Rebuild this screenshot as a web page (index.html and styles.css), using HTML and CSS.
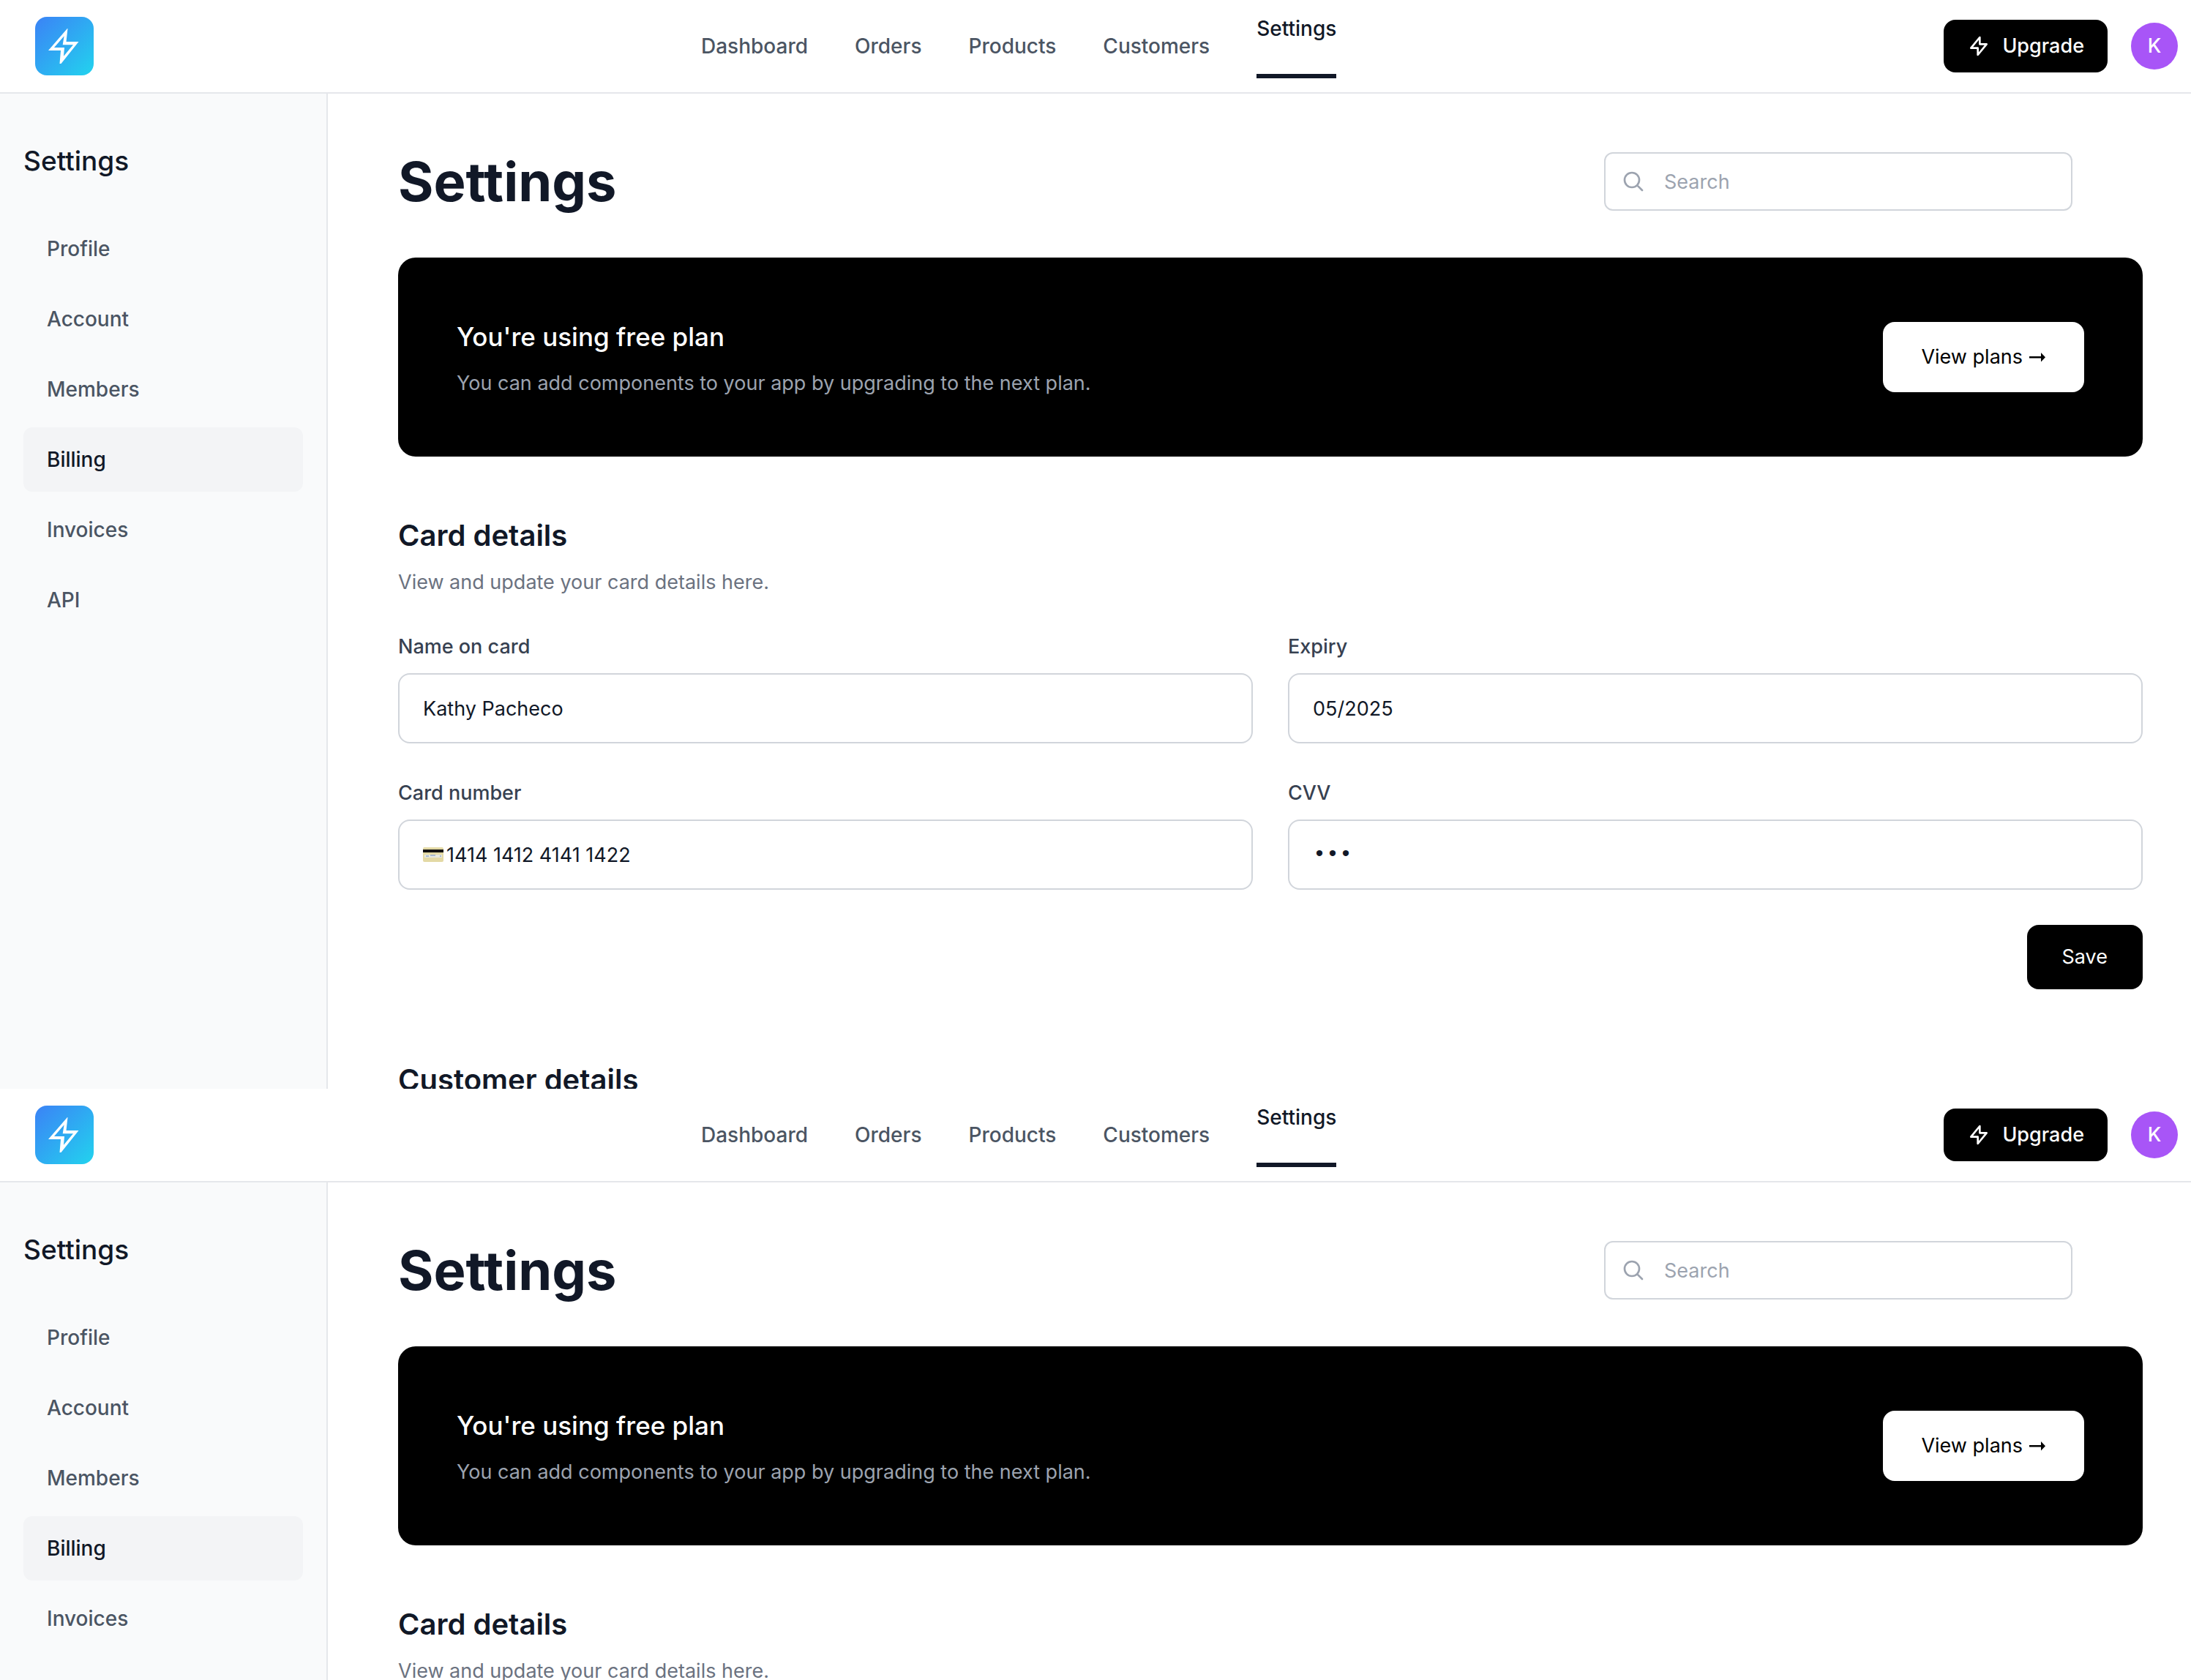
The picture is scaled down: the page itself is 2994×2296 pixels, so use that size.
FILE: index.html
```html
<!DOCTYPE html>
<html lang="en">
<head>
<meta charset="utf-8">
<title>Settings</title>
<meta name="viewport" content="width=device-width, initial-scale=1">
<link rel="stylesheet" href="styles.css">
</head>
<body>
<section class="screen">
  <header class="topbar">
    <a class="logo" href="#" aria-label="Home"><svg viewBox="0 0 80 80" aria-hidden="true"><path fill="#fff" fill-rule="evenodd" d="M44 16 18 46H35L33.500 64H35.500L59.500 34H42.500L44.500 16ZM39.600 26.300 26 42H40L39 53.700 52 38.300H37.700Z"/></svg></a>
    <nav class="topnav" aria-label="Main">
      <a href="#">Dashboard</a><a href="#">Orders</a><a href="#">Products</a><a href="#">Customers</a><a class="current" href="#">Settings</a>
    </nav>
    <div class="actions">
      <button class="btn upgrade" type="button"><svg viewBox="0 0 24 24" aria-hidden="true"><path d="M13 10V3L4 14h7v7l9-11h-7z"/></svg>Upgrade</button>
      <span class="avatar">K</span>
    </div>
  </header>
  <div class="body">
    <aside class="sidebar">
      <h2>Settings</h2>
      <nav class="menu" aria-label="Settings">
        <a href="#">Profile</a><a href="#">Account</a><a href="#">Members</a><a class="current" href="#">Billing</a><a href="#">Invoices</a><a href="#">API</a>
      </nav>
    </aside>
    <main class="content">
      <div class="heading">
        <h1>Settings</h1>
        <div class="search">
          <svg viewBox="0 0 24 24" aria-hidden="true"><path d="M21 21l-5.197-5.197m0 0A7.500 7.500 0 105.196 5.196a7.500 7.500 0 0010.607 10.607z"/></svg>
          <input type="text" placeholder="Search" aria-label="Search">
        </div>
      </div>
      <section class="banner">
        <div class="intro"><h2>You're using free plan</h2><p>You can add components to your app by upgrading to the next plan.</p></div>
        <button class="btn plans" type="button">View plans <svg viewBox="0 0 24 24" aria-hidden="true"><path d="M1 11H17V6L23 12.300 17 18.500V13.500H1Z"/></svg></button>
      </section>
      <form class="section">
        <div class="intro"><h2>Card details</h2><p>View and update your card details here.</p></div>
        <div class="fields">
          <div class="field"><label for="name-1">Name on card</label><input id="name-1" type="text" value="Kathy Pacheco"></div>
          <div class="field"><label for="expiry-1">Expiry</label><input id="expiry-1" type="text" value="05/2025"></div>
          <div class="field"><label for="number-1">Card number</label>
            <div class="cardbox"><svg viewBox="0 0 28 20" aria-hidden="true"><rect width="28" height="20" rx="2" fill="#e3d9a5"/><rect y="3" width="28" height="4" fill="#111"/><rect x="2" y="10" width="24" height="4" fill="#e6e8e0"/><path d="M4 12h4m2-1h7m6 1h2" stroke="#a9bad0" stroke-width="2"/></svg><input id="number-1" type="text" value="1414 1412 4141 1422"></div></div>
          <div class="field"><label for="cvv-1">CVV</label><input id="cvv-1" type="password" value="142"></div>
        </div>
        <button class="btn save" type="button">Save</button>
      </form>
      <section class="section next"><h2>Customer details</h2></section>
    </main>
  </div>
</section>
<section class="screen">
  <header class="topbar">
    <a class="logo" href="#" aria-label="Home"><svg viewBox="0 0 80 80" aria-hidden="true"><path fill="#fff" fill-rule="evenodd" d="M44 16 18 46H35L33.500 64H35.500L59.500 34H42.500L44.500 16ZM39.600 26.300 26 42H40L39 53.700 52 38.300H37.700Z"/></svg></a>
    <nav class="topnav" aria-label="Main">
      <a href="#">Dashboard</a><a href="#">Orders</a><a href="#">Products</a><a href="#">Customers</a><a class="current" href="#">Settings</a>
    </nav>
    <div class="actions">
      <button class="btn upgrade" type="button"><svg viewBox="0 0 24 24" aria-hidden="true"><path d="M13 10V3L4 14h7v7l9-11h-7z"/></svg>Upgrade</button>
      <span class="avatar">K</span>
    </div>
  </header>
  <div class="body">
    <aside class="sidebar">
      <h2>Settings</h2>
      <nav class="menu" aria-label="Settings">
        <a href="#">Profile</a><a href="#">Account</a><a href="#">Members</a><a class="current" href="#">Billing</a><a href="#">Invoices</a>
      </nav>
    </aside>
    <main class="content">
      <div class="heading">
        <h1>Settings</h1>
        <div class="search">
          <svg viewBox="0 0 24 24" aria-hidden="true"><path d="M21 21l-5.197-5.197m0 0A7.500 7.500 0 105.196 5.196a7.500 7.500 0 0010.607 10.607z"/></svg>
          <input type="text" placeholder="Search" aria-label="Search">
        </div>
      </div>
      <section class="banner">
        <div class="intro"><h2>You're using free plan</h2><p>You can add components to your app by upgrading to the next plan.</p></div>
        <button class="btn plans" type="button">View plans <svg viewBox="0 0 24 24" aria-hidden="true"><path d="M1 11H17V6L23 12.300 17 18.500V13.500H1Z"/></svg></button>
      </section>
      <section class="section">
        <div class="intro"><h2>Card details</h2><p>View and update your card details here.</p></div>
      </section>
    </main>
  </div>
</section>
</body>
</html>
```
FILE: styles.css
```css
* { box-sizing: border-box; margin: 0; padding: 0; }

body {
  height: 100vh;
  overflow: hidden;
  background: #fff;
  color: #111827;
  font: 400 27px/40px Inter, "Liberation Sans", sans-serif;
}

a { color: inherit; text-decoration: none; }
input, button { font: inherit; color: inherit; }
h1, h2 { font-weight: 500; }

/* Each screen shows a fixed viewport of the app and cuts off what runs past it. */
.screen {
  display: flex;
  flex-direction: column;
  height: 1488px;
  overflow: hidden;
}

.topbar {
  display: flex;
  flex: none;
  align-items: center;
  justify-content: space-between;
  height: 128px;
  padding: 0 18px 0 48px;
  border-bottom: 2px solid #e5e7eb;
}

.logo {
  width: 80px;
  height: 80px;
  border-radius: 16px;
  background: linear-gradient(135deg, #3b82f6, #22d3ee);
}
.logo svg { display: block; }

.topnav {
  display: flex;
  align-items: center;
  gap: 64px;
  color: #4b5563;
  font-size: 28px;
  font-weight: 500;
}
.topnav .current {
  height: 88px;
  border-bottom: 6px solid #111827;
  color: #111827;
}

.actions { display: flex; align-items: center; gap: 32px; }

.btn {
  display: flex;
  align-items: center;
  border: 0;
  border-radius: 16px;
  background: #000;
  color: #fff;
}
.upgrade { gap: 16px; height: 72px; padding: 0 32px; font-weight: 500; }
.upgrade svg {
  width: 32px;
  height: 32px;
  fill: none;
  stroke: currentColor;
  stroke-width: 2;
  stroke-linecap: round;
  stroke-linejoin: round;
}

.avatar {
  width: 64px;
  height: 64px;
  border-radius: 50%;
  background: #a855f7;
  color: #fff;
  font-weight: 500;
  line-height: 64px;
  text-align: center;
}

.body { display: flex; flex: 1; }

.sidebar {
  flex: none;
  width: 448px;
  padding: 64px 32px 0;
  border-right: 2px solid #e5e7eb;
  background: #f9fafb;
}
.sidebar h2 { font-size: 37px; line-height: 56px; }

.menu {
  display: flex;
  flex-direction: column;
  gap: 8px;
  margin-top: 48px;
  color: #4b5563;
  font-size: 28px;
  font-weight: 500;
}
.menu a { padding: 24px 32px; border-radius: 12px; }
.menu .current { background: #f3f4f6; color: #111827; }

.content { flex: 1; padding: 80px 66px 0 96px; }

.heading {
  display: flex;
  align-items: center;
  justify-content: space-between;
  padding-right: 96px;
}
.heading h1 { font-size: 74px; font-weight: 700; line-height: 80px; }

.search { position: relative; width: 640px; }
.search svg {
  position: absolute;
  top: 24px;
  left: 24px;
  width: 32px;
  height: 32px;
  fill: none;
  stroke: #9ca3af;
  stroke-width: 2;
  stroke-linecap: round;
}
.search input {
  display: block;
  width: 100%;
  height: 80px;
  padding: 0 32px 0 80px;
  border: 2px solid #d1d5db;
  border-radius: 12px;
}
.search input::placeholder { color: #9ca3af; }

.banner {
  display: flex;
  align-items: center;
  justify-content: space-between;
  margin-top: 64px;
  padding: 80px;
  border-radius: 24px;
  background: #000;
  color: #fff;
}
.intro { display: flex; flex-direction: column; gap: 16px; }
.intro p { color: #6b7280; }
.banner h2 { font-size: 35px; line-height: 56px; }
.banner .intro p { color: #9ca3af; }

.plans { gap: 8px; height: 96px; padding: 0 52px; background: #fff; color: #000; }
.plans svg { width: 24px; height: 24px; fill: currentColor; }

.section { display: flex; flex-direction: column; margin-top: 80px; }
.section h2 { font-size: 40px; font-weight: 600; line-height: 56px; }
.section.next { margin-top: 96px; }

.fields {
  display: grid;
  grid-template-columns: 1fr 1fr;
  gap: 48px;
  margin: 48px 0;
}
.field { display: flex; flex-direction: column; gap: 16px; }
.field label { color: #374151; font-weight: 500; }
.field input {
  display: block;
  width: 100%;
  height: 96px;
  padding: 0 32px;
  border: 2px solid #d1d5db;
  border-radius: 16px;
  background: #fff;
}
.field input[type="password"] { font-family: "Liberation Mono", monospace; font-size: 30px; }

.cardbox { position: relative; }
.cardbox svg { position: absolute; top: 38px; left: 34px; width: 28px; height: 20px; }
.cardbox input { padding-left: 64px; }

.save { align-self: flex-end; height: 88px; padding: 0 48px; }
.section .save { margin: 0; }
```
